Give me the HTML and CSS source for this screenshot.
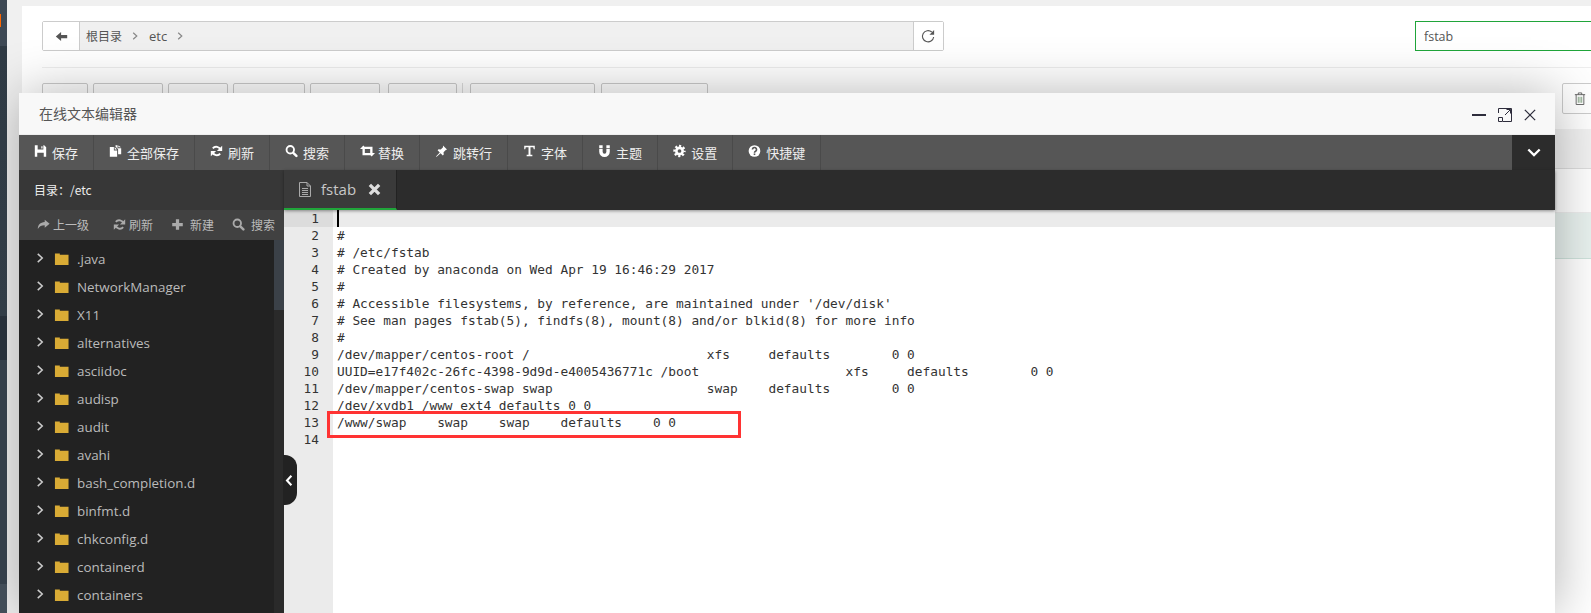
FILE: index.html
```html
<!DOCTYPE html>
<html lang="zh-CN">
<head>
<meta charset="utf-8">
<title>在线文本编辑器</title>
<link rel="stylesheet" href="styles.css">
</head>
<body>
<svg class="sprite" width="0" height="0" aria-hidden="true">
  <symbol id="i-save" viewBox="0 0 16 16"><path fill-rule="evenodd" d="M1 1h11.500l2.500 2.500V15H1zM4.500 1v5h7V1zM9 2h1.500v3H9zM4 10v5h8v-5z"/></symbol>
  <symbol id="i-copy" viewBox="0 0 16 16"><path d="M1 3h5v4.500h4V15H1zM7 3.200 9.800 6.300H7zM8 1h2.500v3.500H15V12h-3.800V5.800L8 2.500zM11.500 1.200l3.300 2.300h-3.300z"/></symbol>
  <symbol id="i-refresh" viewBox="0 0 16 16"><path fill="none" stroke="currentColor" stroke-width="2.400" d="M12.800 6.800A5.300 5.300 0 0 0 3.500 4.800M3.200 9.200a5.300 5.300 0 0 0 9.300 2"/><path d="M15 1.500V8H8.500zM1 14.500V8h6.500z"/></symbol>
  <symbol id="i-search" viewBox="0 0 16 16"><circle cx="6.500" cy="6.500" r="4.600" fill="none" stroke="currentColor" stroke-width="2.300"/><path fill="none" stroke="currentColor" stroke-width="3" stroke-linecap="round" d="M10.500 10.500 14 14"/></symbol>
  <symbol id="i-retweet" viewBox="0 0 18 16"><path d="M0 5.500 4 1.500l4 4H5.800V10.500H10.500l2 2.500H3V5.500zM18 10.500l-4 4-4-4h2.200V5.500H7.500l-2-2.500H15v7.500z"/></symbol>
  <symbol id="i-pin" viewBox="0 0 16 16"><path d="M9.800 1.200l5 5-1.500.5-2.800 2.800.3 2.700-1.200 1.200-2.700-2.700L2 15l-.8-.2 4.700-5-2.700-2.700 1.200-1.200 2.700.3 2.800-2.800z"/></symbol>
  <symbol id="i-text" viewBox="0 0 16 16"><path d="M1.500 1.500h13v4.200h-1.300L12.600 3.500H9.200v9h2.300V14.500h-7v-2h2.300v-9H3.400L2.800 5.700H1.500z"/></symbol>
  <symbol id="i-magnet" viewBox="0 0 16 16"><path d="M1.500 1h4.200v3.200H1.500zM10.300 1h4.200v3.200h-4.200zM1.500 5.200h4.200V9a2.300 2.300 0 0 0 4.600 0V5.200h4.200V9a6.500 6.500 0 0 1-13 0z"/></symbol>
  <symbol id="i-cog" viewBox="0 0 16 16"><circle cx="8" cy="8" r="3.900" fill="none" stroke="currentColor" stroke-width="3.200"/><circle cx="8" cy="8" r="6.200" fill="none" stroke="currentColor" stroke-width="2.800" stroke-dasharray="2.600 2.270" stroke-dashoffset="1.300"/></symbol>
  <symbol id="i-help" viewBox="0 0 16 16"><circle cx="8" cy="8" r="7.200"/><path fill="none" stroke="#565656" stroke-width="2" d="M5.500 6.200a2.500 2.500 0 1 1 3.800 2.100c-.9.500-1.300 1-1.300 1.700"/><path fill="#565656" d="M7 11h2v2H7z"/></symbol>
  <symbol id="i-share" viewBox="0 0 16 16"><path d="M9.500 2 15.500 7l-6 5V9C5.500 9 3 10 1 13.500 1 8.500 4 5.500 9.500 5z"/></symbol>
  <symbol id="i-plus" viewBox="0 0 16 16"><path d="M6 1.500h4V6h4.500v4H10v4.500H6V10H1.500V6H6z"/></symbol>
  <symbol id="i-chev" viewBox="0 0 10 16"><path fill="none" stroke="currentColor" stroke-width="2" d="M2 2.500 8 8l-6 5.500"/></symbol>
  <symbol id="i-folder" viewBox="0 0 16 14"><path d="M1 1h5.200v1.500H15.500V13.500H1z"/></symbol>
</svg>

<aside class="sidenav"><span class="sidenav-mark"></span></aside>

<main class="page">
  <div class="pathbar">
    <div class="crumbs">
      <button class="crumb-btn back"><svg class="ic-back" viewBox="0 0 16 16"><path d="M1 8l6.500-5.500V6H15v4H7.500v3.500z"/></svg></button>
      <div class="crumb-path">
        <span class="crumb-root">根目录</span><svg class="ic-crumb"><use href="#i-chev"/></svg>
        <span>etc</span><svg class="ic-crumb"><use href="#i-chev"/></svg>
      </div>
      <button class="crumb-btn reload"><svg class="ic-reload" viewBox="0 0 16 16"><path fill="none" stroke="currentColor" stroke-width="1.200" d="M13.500 8.500A6 6 0 1 1 11.500 3.200"/><path d="M14 1v5H9z"/></svg></button>
    </div>
    <input class="search" value="fstab" aria-label="搜索">
  </div>

  <div class="actions">
    <button class="btn b1"></button>
    <button class="btn b2"></button>
    <button class="btn b3"><i class="peek peek-thin"></i></button>
    <button class="btn b4"></button>
    <button class="btn b5"><i class="peek peek-thin"></i></button>
    <button class="btn b6"><i class="peek"></i></button>
    <span class="actions-sep"></span>
    <button class="btn b7"><i class="peek peek-small"></i></button>
    <button class="btn b8"><i class="peek peek-small"></i></button>
    <button class="btn del">
      <svg class="ic-trash" viewBox="0 0 14 16"><path fill="none" stroke="#555" stroke-width="1" d="M1 3.500h12M5 3.500V1.500h4v2"/><path fill="none" stroke="#555" stroke-width="1" d="M2.500 3.500V15h9V3.500"/><path fill="none" stroke="#7a9a7a" stroke-width="1" d="M5 6v7M7 6v7M9 6v7"/></svg>
      <i class="del-edge"></i>
    </button>
  </div>

  <div class="table-head"></div>
  <div class="table-row"></div>
  <div class="table-row selected"></div>
</main>

<section class="modal">
  <header class="modal-title">
    <h1>在线文本编辑器</h1>
    <div class="win-ctrls">
      <svg class="win" viewBox="0 0 14 14"><path d="M0 6h14v2H0z"/></svg>
      <svg class="win" viewBox="0 0 14 14"><path fill="none" stroke="currentColor" d="M.5 5V.500h13v13H5M.5 9.500h4v4h-4zM7 7l5.500-5.500M8.500 1.500h4v4"/></svg>
      <svg class="win win-close" viewBox="0 0 14 14"><path fill="none" stroke="currentColor" stroke-width="1.500" d="M1 1l12 12M13 1 1 13"/></svg>
    </div>
  </header>

  <nav class="toolbar">
    <div class="tools">
      <a class="tool"><svg class="ic"><use href="#i-save"/></svg>保存</a>
      <a class="tool"><svg class="ic"><use href="#i-copy"/></svg>全部保存</a>
      <a class="tool"><svg class="ic"><use href="#i-refresh"/></svg>刷新</a>
      <a class="tool"><svg class="ic"><use href="#i-search"/></svg>搜索</a>
      <a class="tool tool-wide"><svg class="ic ic-wide"><use href="#i-retweet"/></svg>替换</a>
      <a class="tool"><svg class="ic"><use href="#i-pin"/></svg>跳转行</a>
      <a class="tool"><svg class="ic"><use href="#i-text"/></svg>字体</a>
      <a class="tool"><svg class="ic"><use href="#i-magnet"/></svg>主题</a>
      <a class="tool"><svg class="ic"><use href="#i-cog"/></svg>设置</a>
      <a class="tool"><svg class="ic"><use href="#i-help"/></svg>快捷键</a>
    </div>
    <div class="toolbar-toggle"><svg class="ic-down" viewBox="0 0 16 10"><path fill="none" stroke="currentColor" stroke-width="2.600" d="M1.500 1.500 8 8l6.500-6.500"/></svg></div>
  </nav>

  <div class="workspace">
    <aside class="files">
      <div class="files-title">目录：/etc</div>
      <div class="files-tools">
        <a class="sub sub-first"><svg class="ic-sub"><use href="#i-share"/></svg>上一级</a>
        <a class="sub"><svg class="ic-sub"><use href="#i-refresh"/></svg>刷新</a>
        <a class="sub sub-gap"><svg class="ic-sub"><use href="#i-plus"/></svg>新建</a>
        <a class="sub sub-gap"><svg class="ic-sub"><use href="#i-search"/></svg>搜索</a>
      </div>
      <div class="files-body">
        <ul class="tree">
          <li><svg class="ic-arrow"><use href="#i-chev"/></svg><svg class="ic-folder"><use href="#i-folder"/></svg>.java</li>
          <li><svg class="ic-arrow"><use href="#i-chev"/></svg><svg class="ic-folder"><use href="#i-folder"/></svg>NetworkManager</li>
          <li><svg class="ic-arrow"><use href="#i-chev"/></svg><svg class="ic-folder"><use href="#i-folder"/></svg>X11</li>
          <li><svg class="ic-arrow"><use href="#i-chev"/></svg><svg class="ic-folder"><use href="#i-folder"/></svg>alternatives</li>
          <li><svg class="ic-arrow"><use href="#i-chev"/></svg><svg class="ic-folder"><use href="#i-folder"/></svg>asciidoc</li>
          <li><svg class="ic-arrow"><use href="#i-chev"/></svg><svg class="ic-folder"><use href="#i-folder"/></svg>audisp</li>
          <li><svg class="ic-arrow"><use href="#i-chev"/></svg><svg class="ic-folder"><use href="#i-folder"/></svg>audit</li>
          <li><svg class="ic-arrow"><use href="#i-chev"/></svg><svg class="ic-folder"><use href="#i-folder"/></svg>avahi</li>
          <li><svg class="ic-arrow"><use href="#i-chev"/></svg><svg class="ic-folder"><use href="#i-folder"/></svg>bash_completion.d</li>
          <li><svg class="ic-arrow"><use href="#i-chev"/></svg><svg class="ic-folder"><use href="#i-folder"/></svg>binfmt.d</li>
          <li><svg class="ic-arrow"><use href="#i-chev"/></svg><svg class="ic-folder"><use href="#i-folder"/></svg>chkconfig.d</li>
          <li><svg class="ic-arrow"><use href="#i-chev"/></svg><svg class="ic-folder"><use href="#i-folder"/></svg>containerd</li>
          <li><svg class="ic-arrow"><use href="#i-chev"/></svg><svg class="ic-folder"><use href="#i-folder"/></svg>containers</li>
        </ul>
        <div class="scrolltrack"><div class="scrollthumb"></div></div>
      </div>
    </aside>

    <div class="editor-pane">
      <div class="tabs">
        <div class="tab">
          <svg class="ic-doc" viewBox="0 0 12 15"><path fill="none" stroke="currentColor" d="M.5.500h7.500l3.500 3.500v10.500H.5zM8 .5V4h3.500M3 6.500h6M3 8.500h6M3 10.500h6M3 12.500h6"/></svg>
          <span>fstab</span>
          <svg class="ic-x" viewBox="0 0 14 14"><path fill="none" stroke="currentColor" stroke-width="3.600" d="M2 2l10 10M12 2 2 12"/></svg>
        </div>
      </div>
      <div class="editor">
        <div class="gutter">
          <div class="num active">1</div><div class="num">2</div><div class="num">3</div><div class="num">4</div><div class="num">5</div><div class="num">6</div><div class="num">7</div><div class="num">8</div><div class="num">9</div><div class="num">10</div><div class="num">11</div><div class="num">12</div><div class="num">13</div><div class="num">14</div>
        </div>
        <div class="code">
          <div class="line active"><i class="cursor"></i></div>
          <div class="line">#</div>
          <div class="line"># /etc/fstab</div>
          <div class="line"># Created by anaconda on Wed Apr 19 16:46:29 2017</div>
          <div class="line">#</div>
          <div class="line"># Accessible filesystems, by reference, are maintained under '/dev/disk'</div>
          <div class="line"># See man pages fstab(5), findfs(8), mount(8) and/or blkid(8) for more info</div>
          <div class="line">#</div>
          <div class="line">/dev/mapper/centos-root /                       xfs     defaults        0 0</div>
          <div class="line">UUID=e17f402c-26fc-4398-9d9d-e4005436771c /boot                   xfs     defaults        0 0</div>
          <div class="line">/dev/mapper/centos-swap swap                    swap    defaults        0 0</div>
          <div class="line">/dev/xvdb1 /www ext4 defaults 0 0</div>
          <div class="line">/www/swap    swap    swap    defaults    0 0</div>
          <div class="line"></div>
        </div>
        <div class="annotation"></div>
      </div>
      <div class="collapse"><svg class="ic-collapse" viewBox="0 0 10 16"><path fill="none" stroke="currentColor" stroke-width="2.600" d="M8 2 2.500 8 8 14"/></svg></div>
    </div>
  </div>
</section>
</body>
</html>
```

FILE: styles.css
```css
* { box-sizing: border-box; }

html, body { height: 100%; }

body {
  margin: 0;
  height: 613px;
  display: flex;
  overflow: hidden;
  background: #f0f0f0;
  font-family: "Open Sans", "Noto Sans CJK SC", sans-serif;
  font-size: 12px;
  color: #555;
}

.sprite { position: absolute; }

svg { fill: currentColor; flex: none; display: block; }

/* left edge of the panel navigation */
.sidenav {
  position: relative;
  z-index: 5;
  width: 7px;
  flex: none;
  padding-top: 14px;
  background: linear-gradient(#3e4955 0, #3e4955 46px, #2f3a44 46px, #323d47 316px, #27303a 316px, #27303a 360px, #343f4a 360px, #343f4a 584px, #424d58 584px);
}

.sidenav-mark { display: block; width: 1px; height: 13px; background: #f60; }

/* page behind the editor */
.page {
  flex: 1;
  min-width: 0;
  margin: 6px 0 0 15px;
  padding: 15px 0 0 20px;
  background: #fff;
  overflow: hidden;
}

.pathbar { display: flex; height: 30px; border-bottom: 0; }

.crumbs {
  width: 902px;
  flex: none;
  display: flex;
  border: 1px solid #ccc;
  background: #f0f0f0;
  border-radius: 2px;
}

.crumb-btn {
  flex: none;
  padding: 0;
  border: 0;
  background: #fff;
  display: flex;
  align-items: center;
  justify-content: center;
  color: #555;
}

.back { width: 37px; border-right: 1px solid #ccc; }
.reload { width: 30px; border-left: 1px solid #ccc; }

.ic-back { width: 13px; height: 13px; color: #555; }
.ic-reload { width: 15px; height: 15px; }

.crumb-path {
  flex: 1;
  display: flex;
  align-items: center;
  padding-left: 6px;
  font-size: 13px;
  color: #555;
}

.crumb-root { font-size: 12px; }

.ic-crumb { width: 6px; height: 10px; margin: 0 11px 0 10px; color: #888; }

.search {
  flex: none;
  width: 220px;
  height: 30px;
  margin-left: 471px;
  padding: 0 8px;
  border: 1px solid #20a53a;
  outline: 0;
  font: 12.500px "Open Sans", sans-serif;
  color: #555;
}

.actions {
  display: flex;
  margin-top: 16px;
  padding-top: 15px;
  border-top: 1px solid #eee;
  height: 63px;
}

.btn {
  flex: none;
  height: 31px;
  padding: 9px 0 0 13px;
  border: 1px solid #ccc;
  border-radius: 2px;
  background: transparent;
  display: flex;
  align-items: flex-start;
}

.b1 { width: 46px; }
.b2 { width: 70px; margin-left: 5px; }
.b3 { width: 60px; margin-left: 5px; }
.b4 { width: 72px; margin-left: 5px; }
.b5 { width: 70px; margin-left: 5px; }
.b6 { width: 69px; margin-left: 8px; }
.b7 { width: 125px; }
.b8 { width: 107px; margin-left: 6px; }

.actions-sep { flex: none; width: 1px; height: 31px; margin: 0 7px 0 5px; background: #ddd; }

.del {
  width: 80px;
  margin-left: 854px;
  padding: 0 0 0 11px;
  align-items: center;
  gap: 5px;
}

.ic-trash { width: 12px; height: 15px; }
.del-edge { display: block; width: 3px; height: 12px; background: #f5d9b0; }

.peek { display: block; width: 14px; height: 3px; background: #222; }
.peek-thin { width: 2px; margin-left: 10px; background: #36a; }
.peek-small { width: 6px; background: #555; }

.table-head {
  height: 40px;
  margin-top: -1px;
  background: #f2f2f2;
  border-bottom: 1px solid #ddd;
}

.table-row { height: 44px; border-bottom: 1px solid #eee; background: #fff; }
.table-row.selected { height: 46px; background: #e9f2ef; border-bottom-color: #cfe3dc; }

/* editor window */
.modal {
  position: absolute;
  left: 19px;
  top: 93px;
  z-index: 3;
  width: 1536px;
  height: 520px;
  display: flex;
  flex-direction: column;
  background: #fff;
  box-shadow: 1px 1px 50px rgba(0, 0, 0, .3);
  overflow: visible;
}

.modal-title {
  flex: none;
  height: 42px;
  padding: 0 19px 0 20px;
  display: flex;
  align-items: center;
  justify-content: space-between;
  background: #f8f8f8;
  border-bottom: 1px solid #eee;
}

.modal-title h1 {
  margin: -2px 0 0;
  font-size: 14px;
  font-weight: 400;
  color: #555;
  font-family: "Noto Sans CJK SC", sans-serif;
}

.win-ctrls { display: flex; gap: 12px; margin-top: 3px; color: #2e2d3c; }
.win { width: 14px; height: 14px; }
.win-close { width: 12px; height: 12px; margin: 1px 0 0; }

.toolbar {
  flex: none;
  height: 35px;
  display: flex;
  background: #2c2c2c;
}

.tools { flex: none; width: 1493px; display: flex; background: #565656; }

.tool {
  display: flex;
  align-items: center;
  gap: 5px;
  padding: 0 15px 0 15px;
  border-right: 1px solid #4a4a4a;
  color: #eee;
  font-family: "Noto Sans CJK SC", sans-serif;
  font-size: 13px;
  white-space: nowrap;
}

.ic { width: 13px; height: 14px; color: #fff; position: relative; top: -2px; }
.ic-wide { width: 15px; }
.tool-wide { gap: 3px; }

.toolbar-toggle { flex: 1; display: flex; align-items: center; justify-content: center; color: #fff; }
.ic-down { width: 14px; height: 9px; }

.workspace { flex: 1; min-height: 0; display: flex; }

.files {
  flex: none;
  width: 265px;
  display: flex;
  flex-direction: column;
  background: #222;
  overflow: hidden;
}

.files-title {
  flex: none;
  height: 40px;
  padding: 0 0 2px 15px;
  display: flex;
  align-items: center;
  background: #373737;
  color: #eee;
  font-family: "Noto Sans CJK SC", sans-serif;
  font-size: 12px;
}

.files-tools {
  flex: none;
  height: 30px;
  padding: 0 0 2px 18px;
  display: flex;
  align-items: center;
  gap: 24px;
  background: #414141;
  color: #bbb;
  font-family: "Noto Sans CJK SC", sans-serif;
  font-size: 12px;
}

.sub { display: flex; align-items: center; gap: 3px; white-space: nowrap; }
.sub-gap { gap: 6px; margin-left: -6px; }
.ic-sub { width: 13px; height: 13px; color: #aaa; }

.files-body { flex: 1; min-height: 0; display: flex; }

.tree {
  flex: 1;
  margin: 0;
  padding: 5px 0 0 17px;
  list-style: none;
  font-size: 13.400px;
  color: #bbb;
}

.tree li { height: 28px; padding-bottom: 1px; display: flex; align-items: center; }

.ic-arrow { width: 8px; height: 12px; margin-right: 10px; color: #ccc; position: relative; top: -1px; }
.ic-folder { width: 15px; height: 14px; margin-right: 8px; color: #d9ab35; }

.scrolltrack { flex: none; width: 10px; background: #2a2a2a; }
.scrollthumb { height: 70px; background: #3b4148; }

.editor-pane { flex: 1; min-width: 0; display: flex; flex-direction: column; position: relative; }

.tabs {
  flex: none;
  height: 40px;
  display: flex;
  background: #2c2c2c;
  box-shadow: 0 1px 3px rgba(0, 0, 0, .4);
  position: relative;
  z-index: 1;
}

.tab {
  width: 113px;
  display: flex;
  align-items: center;
  padding-left: 15px;
  background: #3a3a3a;
  border-bottom: 2px solid #20a53a;
  border-right: 1px solid #222;
  color: #c8c8c8;
  font-size: 15px;
}

.tab span { margin: 0 12px 0 10px; }
.ic-doc { width: 12px; height: 15px; color: #aaa; }
.ic-x { width: 13px; height: 13px; color: #ddd; }

.editor {
  flex: 1;
  min-height: 0;
  display: flex;
  position: relative;
  font-family: "DejaVu Sans Mono", "Liberation Mono", monospace;
  font-size: 12.800px;
  line-height: 17px;
  color: #333;
}

.gutter { flex: none; width: 49px; background: #ebebeb; }
.num { height: 17px; padding-right: 14px; text-align: right; }
.num.active { background: #dcdcdc; }

.code { flex: 1; min-width: 0; }
.line { height: 17px; padding-left: 4px; white-space: pre; }
.line.active { background: #ebebeb; }
.cursor { display: block; width: 2px; height: 17px; background: #000; }

.annotation {
  position: absolute;
  left: 43px;
  top: 201px;
  width: 414px;
  height: 27px;
  border: 3px solid #f33;
}

.collapse {
  position: absolute;
  left: -1px;
  top: 285px;
  z-index: 2;
  width: 14px;
  height: 50px;
  padding-right: 2px;
  display: flex;
  align-items: center;
  justify-content: center;
  background: #222;
  border-radius: 0 12px 12px 0;
  color: #fff;
}

.ic-collapse { width: 8px; height: 13px; }
```
